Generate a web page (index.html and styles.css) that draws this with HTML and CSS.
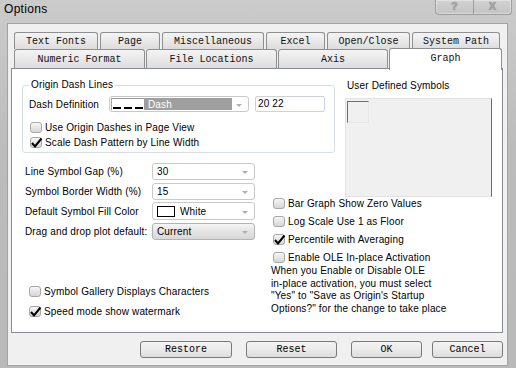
FILE: index.html
```html
<!DOCTYPE html>
<html lang="en">
<head>
  <meta charset="UTF-8" />
  <title>Options</title>
  <link rel="stylesheet" href="styles.css">
</head>
<body>
  <div class="window">
    <div class="titlebar">
      <span class="title">Options</span>
      <div class="caption-btns"><span class="cap-help">?</span><span class="cap-close">X</span></div>
    </div>
    <div class="client">
      <div class="tabs">
        <div class="tab-row row1">
          <div class="tab t-text">Text Fonts</div>
          <div class="tab t-page">Page</div>
          <div class="tab t-misc">Miscellaneous</div>
          <div class="tab t-excel">Excel</div>
          <div class="tab t-open">Open/Close</div>
          <div class="tab t-sys">System Path</div>
        </div>
        <div class="tab-row row2">
          <div class="tab t-num">Numeric Format</div>
          <div class="tab t-file">File Locations</div>
          <div class="tab t-axis">Axis</div>
          <div class="tab t-graph active">Graph</div>
        </div>
      </div>

      <div class="panel">
        <div class="graph-grid">
          <fieldset class="group">
            <legend>Origin Dash Lines</legend>
            <div class="dash-row">
              <span class="dash-label">Dash Definition</span>
              <div class="combo dash-combo">
                <div class="dash-sel"><span class="dash-sample"></span><span class="dash-name">Dash</span></div>
                <span class="arrow"></span>
              </div>
              <div class="textfield">20 22</div>
            </div>
            <div class="check-row">
              <span class="cb"></span><span>Use Origin Dashes in Page View</span>
            </div>
            <div class="check-row">
              <span class="cb checked"><svg viewBox="0 0 12 12" width="12" height="12"><path d="M2 6 L5 9.5 L11.5 1.5" fill="none" stroke="#000" stroke-width="2"/></svg></span><span>Scale Dash Pattern by Line Width</span>
            </div>
          </fieldset>

          <div class="symbols">
            <div class="symbols-label">User Defined Symbols</div>
            <div class="symbols-box"><div class="symbol-cell"></div></div>
          </div>

          <div class="form-col">
            <div class="frow">
              <span class="flabel">Line Symbol Gap (%)</span>
              <div class="combo fcombo"><span class="value">30</span><span class="arrow"></span></div>
            </div>
            <div class="frow">
              <span class="flabel">Symbol Border Width (%)</span>
              <div class="combo fcombo"><span class="value">15</span><span class="arrow"></span></div>
            </div>
            <div class="frow">
              <span class="flabel">Default Symbol Fill Color</span>
              <div class="combo fcombo tall"><span class="swatch"></span><span class="value">White</span><span class="arrow"></span></div>
            </div>
            <div class="frow">
              <span class="flabel">Drag and drop plot default:</span>
              <div class="combo fcombo dropdown"><span class="value">Current</span><span class="arrow"></span></div>
            </div>

            <div class="bottom-checks">
              <div class="check-row">
                <span class="cb"></span><span>Symbol Gallery Displays Characters</span>
              </div>
              <div class="check-row">
                <span class="cb checked"><svg viewBox="0 0 12 12" width="12" height="12"><path d="M2 6 L5 9.5 L11.5 1.5" fill="none" stroke="#000" stroke-width="2"/></svg></span><span>Speed mode show watermark</span>
              </div>
            </div>
          </div>

          <div class="checks-col">
            <div class="check-row">
              <span class="cb"></span><span>Bar Graph Show Zero Values</span>
            </div>
            <div class="check-row">
              <span class="cb"></span><span>Log Scale Use 1 as Floor</span>
            </div>
            <div class="check-row">
              <span class="cb checked"><svg viewBox="0 0 12 12" width="12" height="12"><path d="M2 6 L5 9.5 L11.5 1.5" fill="none" stroke="#000" stroke-width="2"/></svg></span><span>Percentile with Averaging</span>
            </div>
            <div class="check-row">
              <span class="cb"></span><span>Enable OLE In-place Activation</span>
            </div>
            <p class="ole-note">When you Enable or Disable OLE<br>in-place activation, you must select<br>"Yes" to "Save as Origin's Startup<br>Options?" for the change to take place</p>
          </div>
        </div>
      </div>

      <div class="buttons">
        <button class="btn b-restore">Restore</button>
        <button class="btn b-reset">Reset</button>
        <button class="btn b-ok">OK</button>
        <button class="btn b-cancel">Cancel</button>
      </div>
    </div>
  </div>
</body>
</html>
```

FILE: styles.css
```css
:root {
  --frame: #bfbfbf;
  --client: #f0f0f0;
  --tab-border: #8e8f8f;
  --panel-border: #898c95;
  --combo-border: #c9c9c9;
  --mono: 'Liberation Mono', 'Courier New', monospace;
}
html, body {
  margin: 0;
  padding: 0;
}
body {
  width: 516px;
  height: 368px;
  overflow: hidden;
  font-family: 'Liberation Sans', Arial, sans-serif;
  font-size: 10px;
  letter-spacing: 0.15px;
  color: #000;
}
.window {
  width: 516px;
  height: 368px;
  background: linear-gradient(#cbcbcb, #bcbcbc 40%, #b9b9b9);
  display: flex;
  flex-direction: column;
}
.titlebar {
  height: 23px;
  flex: none;
  display: flex;
  justify-content: space-between;
  align-items: flex-start;
}
.title {
  font-size: 12px;
  letter-spacing: 0.3px;
  line-height: 14px;
  padding: 2px 0 0 4px;
}
.caption-btns {
  display: flex;
  height: 14px;
  margin-right: 4px;
  border: 1px solid #9d9d9d;
  border-top: none;
  border-radius: 0 0 4px 4px;
  background: linear-gradient(#d2d2d2, #c4c4c4);
  box-shadow: inset 0 0 0 1px rgba(255,255,255,0.35);
}
.caption-btns span {
  width: 37px;
  text-align: center;
  color: #a6a6a6;
  font-weight: bold;
  font-size: 11px;
  line-height: 13px;
  text-shadow: 0 0 1px #777;
}
.cap-help {
  border-right: 1px solid #9d9d9d;
}
.client {
  flex: 1;
  margin: 0 8px 2px 7px;
  background: var(--client);
  border: 1px solid #a3a3a3;
  padding: 8px 4px 0 3px;
  box-sizing: border-box;
}

/* tabs */
.tabs {
  margin-left: 3px;
}
.tab-row {
  display: flex;
  align-items: flex-start;
}
.row1 {
  gap: 2px;
  height: 17px;
}
.row2 {
  gap: 1px;
  height: 19px;
}
.tab {
  box-sizing: border-box;
  border: 1px solid var(--tab-border);
  border-bottom: none;
  border-radius: 3px 3px 0 0;
  background: linear-gradient(#f4f4f4, #e9e9e9 50%, #dcdcdc);
  font-family: var(--mono);
  font-size: 10px;
  letter-spacing: 0;
  line-height: 15px;
  color: #111;
  text-align: center;
  white-space: nowrap;
}
.row1 .tab { height: 17px; padding-top: 1px; }
.row2 .tab { height: 19px; padding-top: 2px; }
.t-text { width: 84px; }
.t-page { width: 60px; }
.t-misc { width: 102px; }
.t-excel { width: 59px; }
.t-open { width: 83px; }
.t-sys { width: 88px; }
.t-num { width: 131px; }
.t-file { width: 131px; }
.t-axis { width: 110px; }
.t-graph { width: 113px; }
.row2 .tab.active {
  height: 22px;
  margin-top: -1px;
  padding-top: 2px;
  background: #fff;
  position: relative;
  z-index: 1;
}

/* panel */
.panel {
  box-sizing: border-box;
  width: 492px;
  height: 265px;
  border: 1px solid var(--panel-border);
  background: #fff;
  padding: 11px 0 0 10px;
}
.graph-grid {
  display: grid;
  grid-template-columns: 249px 64px 10px 147px;
  grid-template-rows: 82px 35px auto;
}
.group {
  grid-column: 1 / 3;
  grid-row: 1;
  align-self: start;
  margin: 0;
  min-width: 0;
  padding: 0 6px 4px 6px;
  border: 1px solid #d5dfe5;
  border-radius: 3px;
}
.group legend {
  padding: 0 2px;
  line-height: 10px;
}
.dash-row {
  display: flex;
  align-items: center;
  margin-top: 6px;
  height: 16px;
}
.dash-label {
  width: 80px;
  flex: none;
}
.combo {
  box-sizing: border-box;
  display: flex;
  align-items: center;
  background: #fff;
  border: 1px solid var(--combo-border);
  border-radius: 3px;
  padding: 0 6px 0 4px;
}
.combo .value {
  flex: 1;
}
.arrow {
  flex: none;
  width: 0;
  height: 0;
  border-left: 3px solid transparent;
  border-right: 3px solid transparent;
  border-top: 3px solid #b0b0b0;
  margin-top: 2px;
}
.dash-combo {
  width: 140px;
  height: 16px;
  padding-left: 1px;
}
.dash-sel {
  flex: 1;
  display: flex;
  align-items: center;
  height: 12px;
  margin-right: 4px;
  background: #9f9f9f;
}
.dash-sample {
  width: 32px;
  height: 11px;
  margin-left: 1px;
  background-color: #fff;
  background-image: repeating-linear-gradient(90deg, #000 0 8px, transparent 8px 11px);
  background-size: 30px 2px;
  background-position: 1px 8px;
  background-repeat: no-repeat;
}
.dash-name {
  color: #fff;
  margin-left: 4px;
}
.textfield {
  box-sizing: border-box;
  width: 70px;
  height: 16px;
  margin-left: 6px;
  border: 1px solid #cfd3d8;
  border-radius: 2px;
  padding: 0 2px;
  line-height: 14px;
}
.check-row {
  display: flex;
  align-items: center;
  height: 12px;
  white-space: nowrap;
}
.group .check-row {
  margin-top: 9px;
  margin-left: 1px;
}
.group .check-row + .check-row {
  margin-top: 3px;
}
.cb {
  box-sizing: border-box;
  width: 12px;
  height: 11px;
  flex: none;
  margin-right: 3px;
  border: 1px solid #a7a7a7;
  border-radius: 3px;
  background: linear-gradient(#f6f6f6, #d6d6d6);
  position: relative;
}
.cb svg {
  position: absolute;
  left: -1px;
  top: -1px;
  overflow: visible;
}

/* user defined symbols */
.symbols {
  grid-column: 4;
  grid-row: 1 / 3;
}
.symbols-label {
  line-height: 10px;
  padding: 1px 0 0 2px;
}
.symbols-box {
  box-sizing: border-box;
  margin-top: 7px;
  width: 147px;
  height: 99px;
  background: #f0f0f0;
  border: 1px solid #e3e3e3;
  border-right-color: #6d6d6d;
  padding: 2px 0 0 1px;
}
.symbol-cell {
  box-sizing: border-box;
  width: 22px;
  height: 22px;
  border: 1px solid #e6e6e6;
  border-top-color: #6e6e6e;
  border-left-color: #6e6e6e;
}

/* left form */
.form-col {
  grid-column: 1;
  grid-row: 2 / 4;
  padding-left: 3px;
}
.frow {
  display: flex;
  align-items: center;
  height: 18px;
  margin-bottom: 2px;
}
.flabel {
  width: 127px;
  flex: none;
  white-space: nowrap;
}
.fcombo {
  width: 103px;
  height: 17px;
}
.fcombo.tall {
  height: 18px;
}
.swatch {
  box-sizing: border-box;
  width: 18px;
  height: 11px;
  border: 1px solid #000;
  background: #fff;
  margin-right: 5px;
  flex: none;
}
.dropdown {
  background: linear-gradient(#f5f5f5, #e4e4e4 50%, #d8d8d8);
  border-color: #b4b4b4;
}
.bottom-checks {
  margin-top: 45px;
  padding-left: 4px;
}
.bottom-checks .check-row + .check-row {
  margin-top: 8px;
}

/* right checks */
.checks-col {
  grid-column: 2 / 5;
  grid-row: 3;
  padding-top: 0;
}
.checks-col .check-row {
  margin: 0 0 6px 2px;
}
.checks-col .check-row:nth-of-type(4) {
  margin-bottom: 2px;
}
.ole-note {
  margin: 0;
  line-height: 12.5px;
  white-space: nowrap;
}

/* buttons */
.buttons {
  display: flex;
  justify-content: flex-end;
  margin-top: 8px;
}
.btn {
  box-sizing: border-box;
  height: 17px;
  padding: 0;
  border: 1px solid #7a7a7a;
  border-radius: 3px;
  background: linear-gradient(#f3f3f3, #ebebeb 50%, #dcdcdc);
  font-family: var(--mono);
  font-size: 10px;
  color: #000;
}
.b-restore { width: 92px; }
.b-reset { width: 91px; margin-left: 14px; }
.b-ok { width: 71px; margin-left: 14px; }
.b-cancel { width: 71px; margin-left: 10px; }
```
